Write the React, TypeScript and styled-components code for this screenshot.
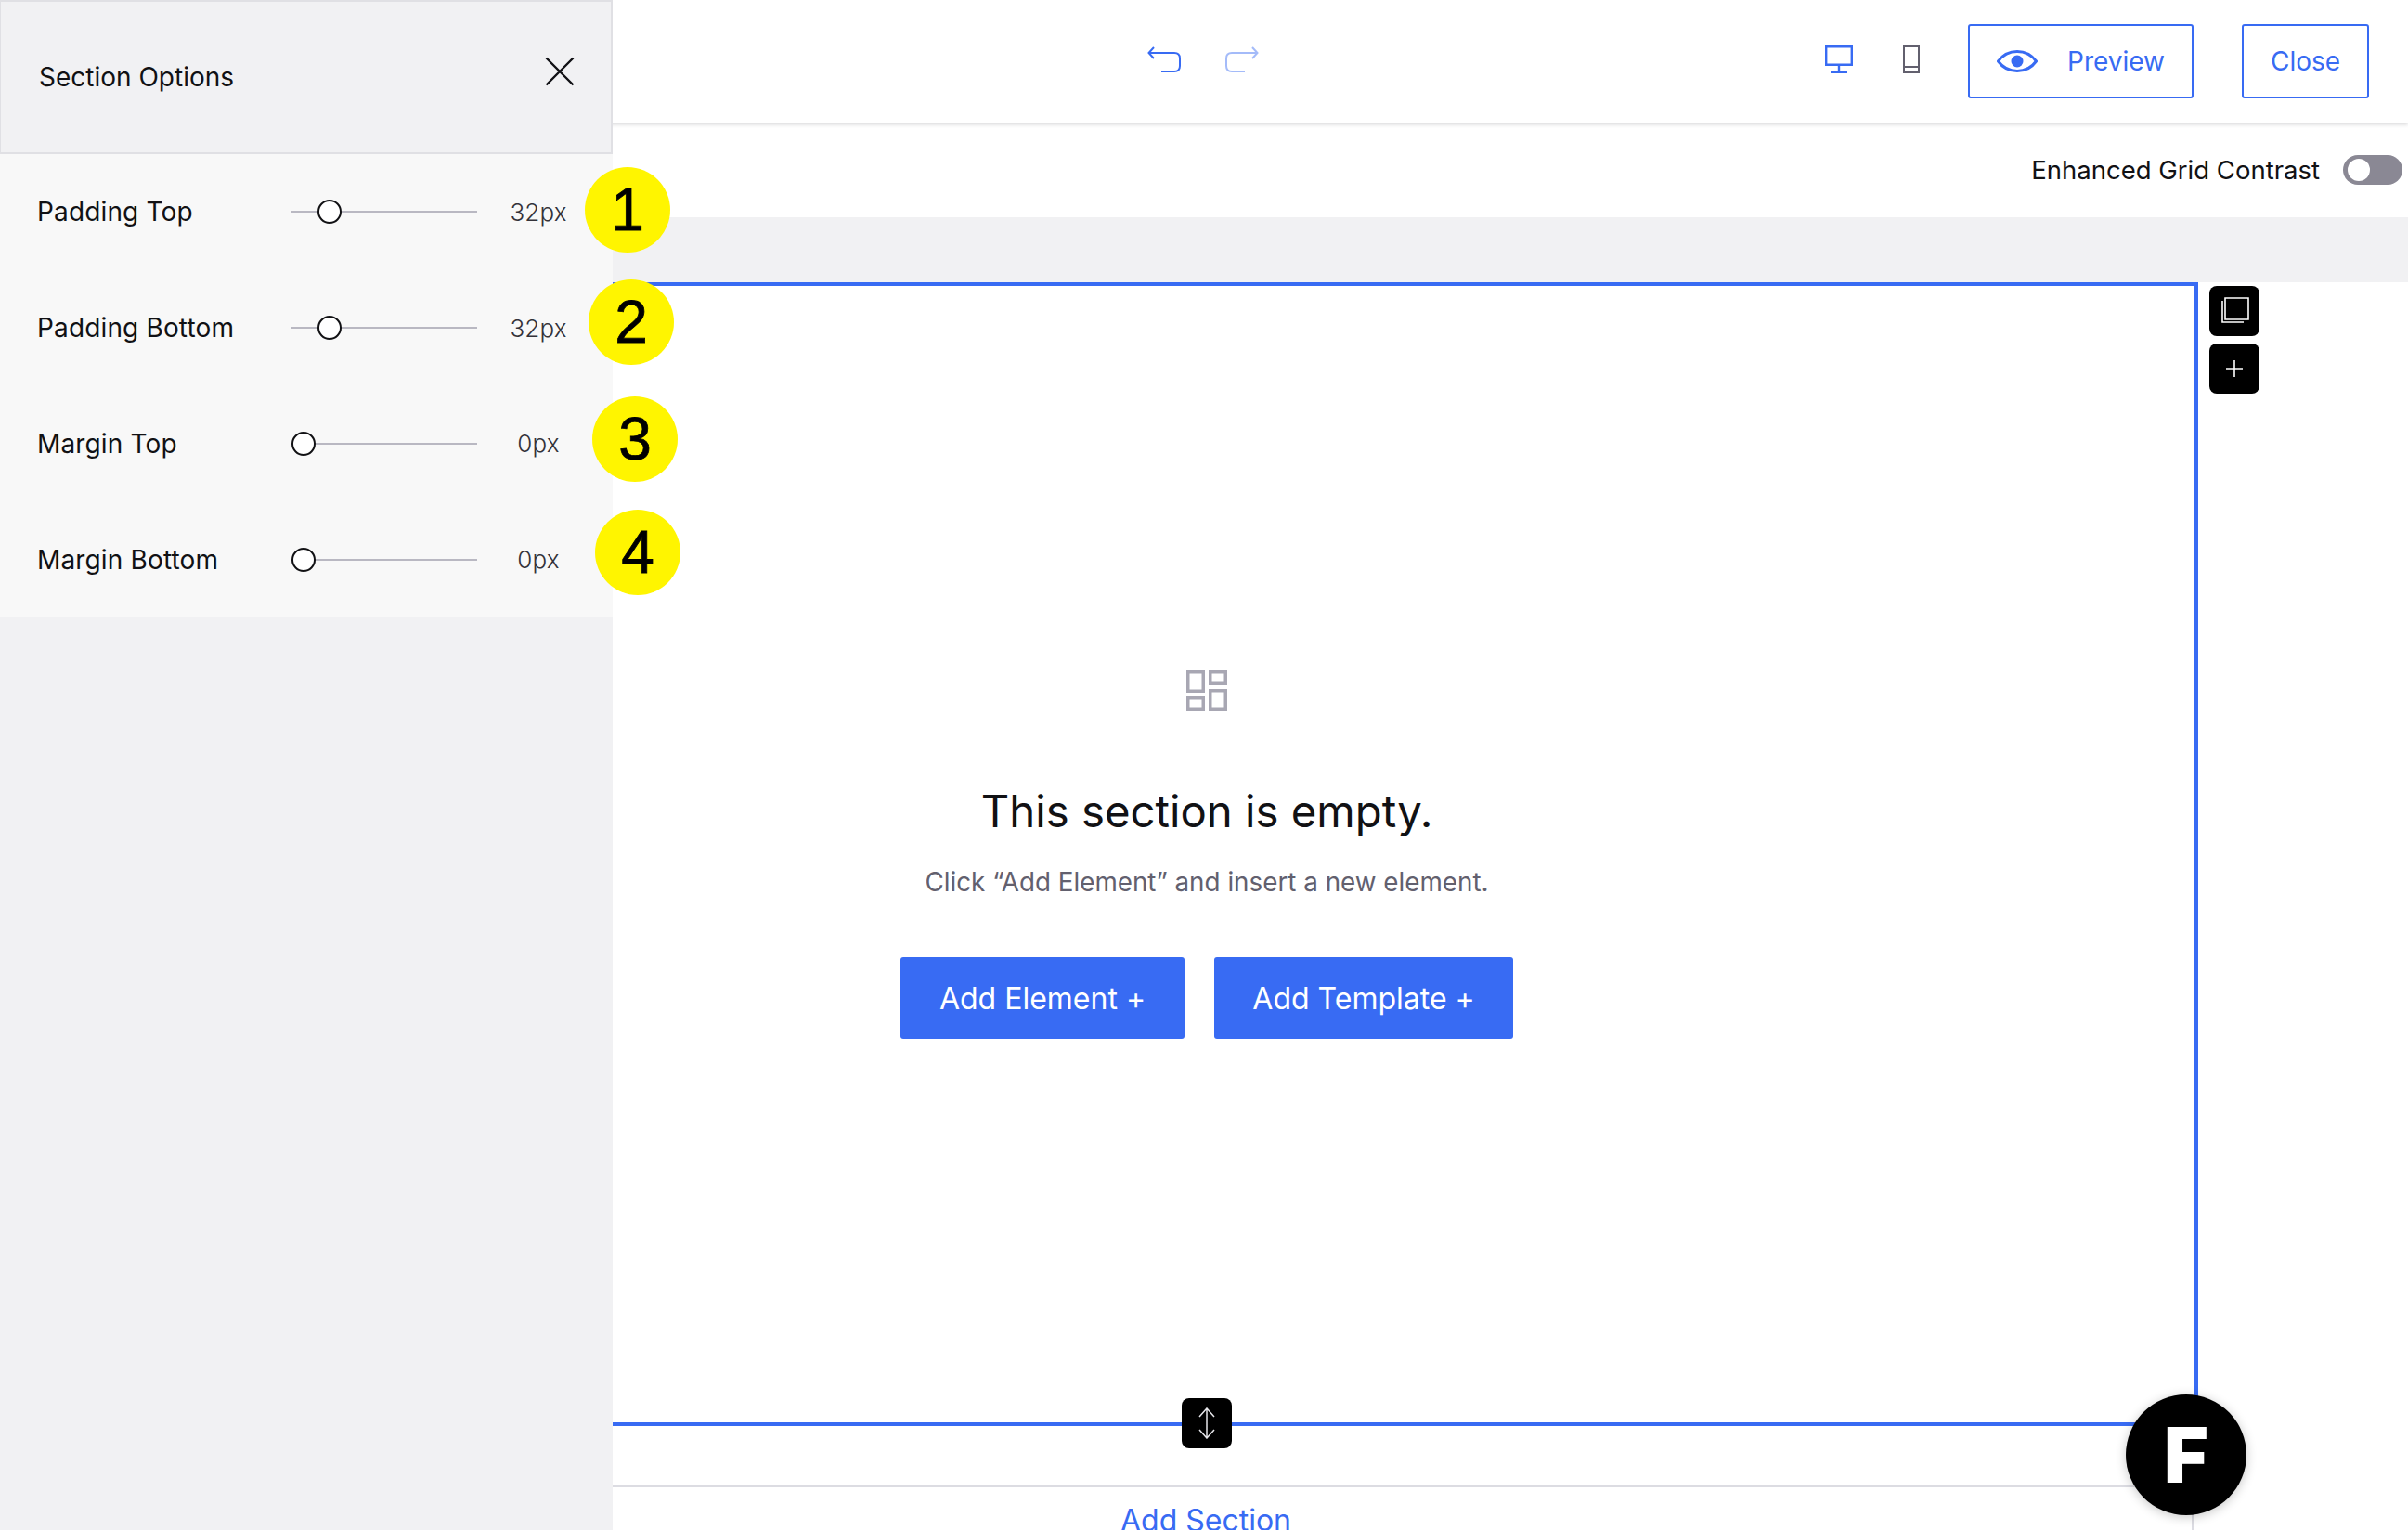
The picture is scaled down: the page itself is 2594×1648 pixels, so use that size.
import React from 'react'
import styled, { createGlobalStyle } from 'styled-components'

const blue = '#386bf3'
const ink = '#111114'
const grey = '#62606e'
const panelGrey = '#f1f1f3'

const GlobalStyle = createGlobalStyle`
  html, body {
    margin: 0;
    padding: 0;
    height: 1648px;
    overflow: hidden;
    background: #fff;
    font-family: Inter, "Liberation Sans", sans-serif;
    color: ${ink};
  }
  * {
    box-sizing: border-box;
  }
`

const Page = styled.div`
  position: relative;
  width: 2594px;
  height: 1648px;
  overflow: hidden;
`

const TopBar = styled.header`
  height: 132px;
  display: grid;
  grid-template-columns: 1fr auto 1fr;
  align-items: center;
  padding: 0 42px;
  background: #fff;
  box-shadow: 0 2px 4px rgba(60, 60, 70, 0.22);
  position: relative;
`

const HistoryGroup = styled.div`
  grid-column: 2;
  display: flex;
  align-items: center;
  gap: 46px;
  margin: 0 2px 4px 0;
`

const TopActions = styled.div`
  grid-column: 3;
  justify-self: end;
  display: flex;
  align-items: center;
`

const DeviceGroup = styled.div`
  display: flex;
  align-items: center;
  gap: 54px;
  margin-right: 52px;
  margin-bottom: 4px;
`

const OutlineButton = styled.button<{ $width: number }>`
  width: ${({ $width }) => $width}px;
  height: 80px;
  display: flex;
  align-items: center;
  justify-content: center;
  gap: 32px;
  border: 2px solid ${blue};
  border-radius: 3px;
  background: #fff;
  color: ${blue};
  font-family: inherit;
  font-size: 28px;
  padding: 0;
  & + & {
    margin-left: 52px;
  }
`

const ContrastBar = styled.div`
  height: 102px;
  display: flex;
  align-items: center;
  justify-content: flex-end;
  gap: 25px;
  padding: 0 6px 1px 0;
  font-size: 27.5px;
`

const Toggle = styled.span`
  width: 64px;
  height: 32px;
  border-radius: 16px;
  background: #8a8894;
  display: flex;
  align-items: center;
  padding-left: 5px;
  &::before {
    content: '';
    width: 24px;
    height: 24px;
    border-radius: 50%;
    background: #fff;
  }
`

const GreyBand = styled.div`
  height: 70px;
  background: ${panelGrey};
`

const SectionFrame = styled.section`
  position: relative;
  height: 1232px;
  margin: 0 226px 0 232px;
  border: 4px solid ${blue};
  display: flex;
  flex-direction: column;
  align-items: center;
  padding-top: 414px;
`

const EmptyHeading = styled.h2`
  margin: 78px 0 0;
  font-size: 47.3px;
  font-weight: 400;
  line-height: 60px;
`

const EmptyHint = styled.p`
  margin: 28px 0 0;
  font-size: 27.8px;
  line-height: 36px;
  color: ${grey};
`

const AddRow = styled.div`
  display: flex;
  gap: 32px;
  margin-top: 63px;
`

const AddButton = styled.button<{ $width: number }>`
  width: ${({ $width }) => $width}px;
  height: 88px;
  border: none;
  border-radius: 3px;
  background: ${blue};
  color: #fff;
  font-family: inherit;
  font-size: 32px;
  padding: 0;
`

const SideTools = styled.div`
  position: absolute;
  top: 0;
  left: calc(100% + 16px);
  display: flex;
  flex-direction: column;
  gap: 8px;
`

const BlackTool = styled.span`
  width: 54px;
  height: 54px;
  border-radius: 8px;
  background: #000;
  display: flex;
  align-items: center;
  justify-content: center;
`

const ResizeHandle = styled(BlackTool)`
  position: absolute;
  left: 50%;
  bottom: -28px;
  transform: translateX(-50%);
`

const CopyGlyph = styled.svg`
  margin: 0 0 2px 2px;
`

const Footer = styled.footer`
  margin: 64px 231px 0 0;
  height: 48px;
  border-top: 2px solid #dcdce2;
  border-right: 2px solid #dcdce2;
  padding: 14px 0 0 232px;
  text-align: center;
`

const AddSection = styled.a`
  display: block;
  margin-right: -5px;
  color: ${blue};
  font-size: 32px;
  line-height: 44px;
`

const BrandBubble = styled.div`
  position: absolute;
  left: 2290px;
  top: 1502px;
  width: 130px;
  height: 130px;
  border-radius: 50%;
  background: #000;
  color: #fff;
  display: flex;
  align-items: center;
  justify-content: center;
  font-size: 82px;
  font-weight: 900;
  box-shadow: 0 2px 12px rgba(0, 0, 0, 0.22);
`

const Sidebar = styled.aside`
  position: absolute;
  left: 0;
  top: 0;
  bottom: 0;
  width: 660px;
  background: ${panelGrey};
`

const SidebarHeader = styled.div`
  height: 166px;
  display: flex;
  align-items: center;
  justify-content: space-between;
  padding: 0 39px 0 41px;
  border: 2px solid #e0e0e4;
  border-left-width: 1px;
  font-size: 28px;
`

const CloseGlyph = styled.svg`
  margin-bottom: 12px;
`

const OptionRow = styled.div`
  position: relative;
  height: 124.75px;
  display: grid;
  grid-template-columns: 274px 200px 132px;
  align-items: center;
  padding-left: 40px;
  background: #f8f8f8;
  font-size: 28px;
  letter-spacing: 0.15px;
`

const Slider = styled.div`
  position: relative;
  height: 26px;
  &::before {
    content: '';
    position: absolute;
    left: 0;
    right: 0;
    top: 12px;
    height: 2px;
    background: #b9b8c2;
  }
`

const SliderThumb = styled.span<{ $offset: number }>`
  position: absolute;
  top: 0;
  left: ${({ $offset }) => $offset}px;
  width: 26px;
  height: 26px;
  border-radius: 50%;
  background: #fff;
  border: 2px solid ${ink};
`

const OptionValue = styled.span`
  font-size: 26px;
  font-weight: 300;
  text-align: center;
  color: #33323a;
`

const NumberBadge = styled.span<{ $left: number; $top: number }>`
  position: absolute;
  left: ${({ $left }) => $left}px;
  top: ${({ $top }) => $top}px;
  width: 92px;
  height: 92px;
  border-radius: 50%;
  background: #fff500;
  color: #000;
  display: flex;
  align-items: center;
  justify-content: center;
  font-family: 'Liberation Sans', Arial, sans-serif;
  font-size: 64px;
  letter-spacing: 0;
  -webkit-text-stroke: 0.8px #000;
`

const options = [
  { label: 'Padding Top', value: '32px', offset: 28, left: 630, top: 14 },
  { label: 'Padding Bottom', value: '32px', offset: 28, left: 634, top: 10 },
  { label: 'Margin Top', value: '0px', offset: 0, left: 638, top: 11 },
  { label: 'Margin Bottom', value: '0px', offset: 0, left: 641, top: 9 }
]

const HistoryIcon = ({ flip, faded }: { flip?: boolean; faded?: boolean }) => (
  <svg
    width="37"
    height="28"
    viewBox="0 0 37 28"
    fill="none"
    stroke={blue}
    strokeWidth="2"
    opacity={faded ? 0.45 : 1}
    style={flip ? { transform: 'scaleX(-1)' } : undefined}
  >
    <path d="M7 1 1.5 7 7 13M1.5 7H29q6 0 6 6v8q0 6-6 6H15" />
  </svg>
)

const App: React.FC = () => (
  <Page>
    <GlobalStyle />
    <TopBar>
      <HistoryGroup>
        <HistoryIcon />
        <HistoryIcon flip faded />
      </HistoryGroup>
      <TopActions>
        <DeviceGroup>
          <svg width="30" height="30" viewBox="0 0 30 30" fill="none" stroke={blue} strokeWidth="2.4">
            <path d="M1.200 1.200h27.600v19.600H1.200zM15 21v8M6 28.800h18" />
          </svg>
          <svg width="18" height="30" viewBox="0 0 18 30" fill="none" stroke={grey} strokeWidth="2">
            <path d="M1 1h16v28H1zM1 23h16" />
          </svg>
        </DeviceGroup>
        <OutlineButton $width={243}>
          <svg width="44" height="24" viewBox="0 0 44 24">
            <path
              d="M1.500 12C7 4.500 14 1.500 22 1.500S37 4.500 42.500 12C37 19.500 30 22.500 22 22.500S7 19.500 1.500 12Z"
              fill="none"
              stroke={blue}
              strokeWidth="3"
            />
            <circle cx="22" cy="12" r="6.500" fill={blue} />
          </svg>
          Preview
        </OutlineButton>
        <OutlineButton $width={137}>Close</OutlineButton>
      </TopActions>
    </TopBar>

    <ContrastBar>
      Enhanced Grid Contrast
      <Toggle />
    </ContrastBar>
    <GreyBand />

    <SectionFrame>
      <svg width="44" height="44" viewBox="0 0 44 44" fill="none" stroke="#a8a7b3" strokeWidth="3.500">
        <path d="M1.750 1.750h16.500v20.500H1.750zM25.750 1.750h16.500v12.500h-16.500zM1.750 29.750h16.500v12.500H1.750zM25.750 21.750h16.500v20.500h-16.500z" />
      </svg>
      <EmptyHeading>This section is empty.</EmptyHeading>
      <EmptyHint>Click “Add Element” and insert a new element.</EmptyHint>
      <AddRow>
        <AddButton $width={306}>Add Element +</AddButton>
        <AddButton $width={322}>Add Template +</AddButton>
      </AddRow>
      <SideTools>
        <BlackTool>
          <CopyGlyph width="30" height="28" viewBox="0 0 30 28" fill="none" stroke="#fff" strokeWidth="1.600">
            <path d="M4 1h25v23H4zM1 4v23h23" />
          </CopyGlyph>
        </BlackTool>
        <BlackTool>
          <svg width="18" height="18" viewBox="0 0 18 18" stroke="#fff" strokeWidth="1.600">
            <path d="M9 0v18M0 9h18" />
          </svg>
        </BlackTool>
      </SideTools>
      <ResizeHandle>
        <svg width="20" height="34" viewBox="0 0 20 34" fill="none" stroke="#e6e6ea" strokeWidth="1.500">
          <path d="M10 1v32M2 10l8-9 8 9M2 24l8 9 8-9" />
        </svg>
      </ResizeHandle>
    </SectionFrame>

    <Footer>
      <AddSection>Add Section</AddSection>
    </Footer>

    <BrandBubble>F</BrandBubble>

    <Sidebar>
      <SidebarHeader>
        Section Options
        <CloseGlyph width="32" height="32" viewBox="0 0 32 32" stroke="#111114" strokeWidth="2.400">
          <path d="M1.500 1.500l29 29M30.500 1.500l-29 29" />
        </CloseGlyph>
      </SidebarHeader>
      {options.map((option, index) => (
        <OptionRow key={option.label}>
          <span>{option.label}</span>
          <Slider>
            <SliderThumb $offset={option.offset} />
          </Slider>
          <OptionValue>{option.value}</OptionValue>
          <NumberBadge $left={option.left} $top={option.top}>
            {index + 1}
          </NumberBadge>
        </OptionRow>
      ))}
    </Sidebar>
  </Page>
)

export default App
